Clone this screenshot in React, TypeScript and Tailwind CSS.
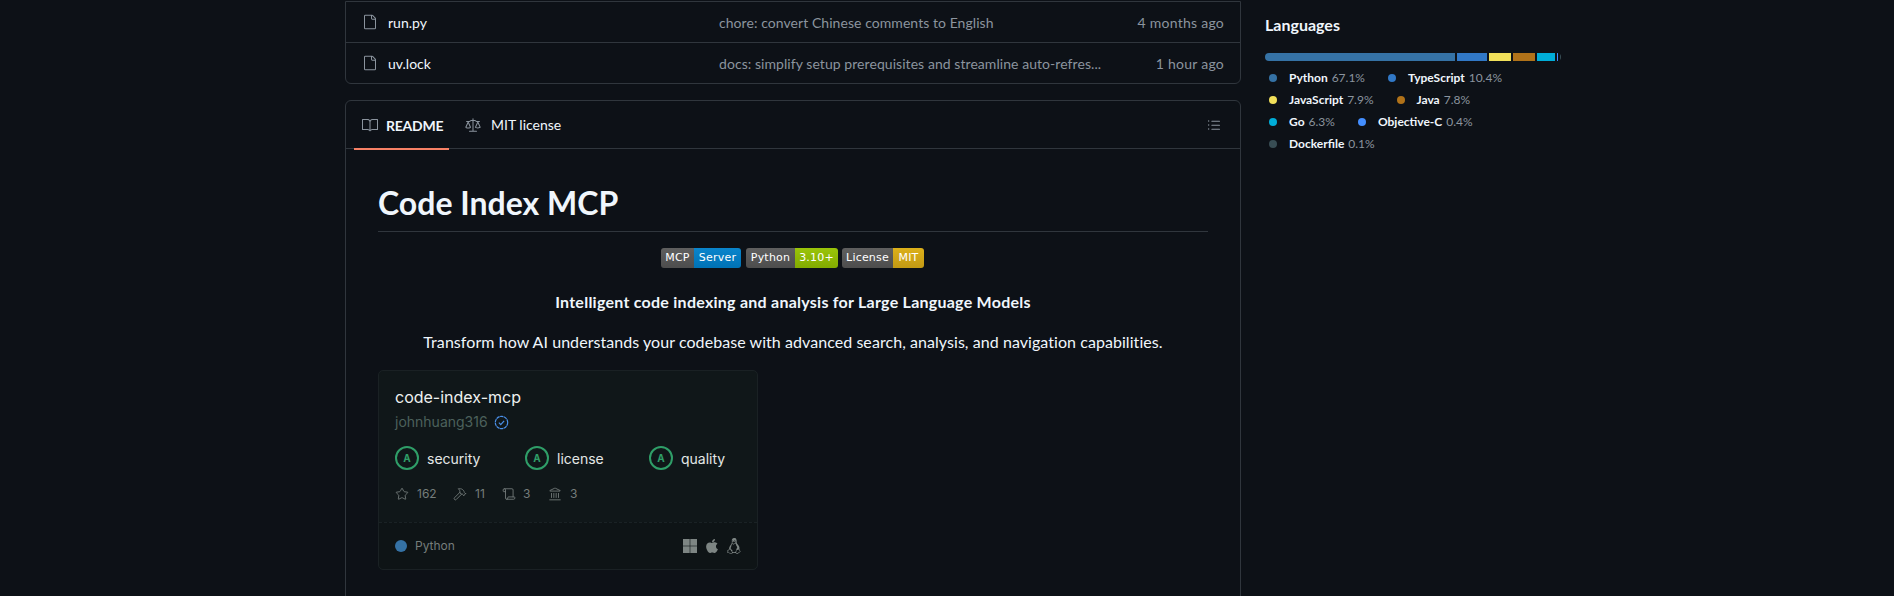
import { GoFile, GoBook, GoLaw, GoListUnordered } from "react-icons/go";
import { FaApple } from "react-icons/fa";
import { VscTerminalLinux } from "react-icons/vsc";
import { Star, Hammer, Scroll, Landmark } from "lucide-react";

const ui = "font-['Lato','Noto_Sans',sans-serif]";

function FileRow({ name, msg, time, last }: { name: string; msg: string; time: string; last?: boolean }) {
  return (
    <div className={`flex items-center pl-[16px] pr-[16px] ${last ? "h-[40px]" : "h-[41px] border-b border-[#30363d]"}`}>
      <GoFile className="w-4 h-4 text-[#8b949e] shrink-0" />
      <span className="ml-[10px] w-[331px] text-[14px] text-[#f0f6fc]">{name}</span>
      <span className="flex-1 text-[14px] tracking-[0.06px] text-[#8b949e]">{msg}</span>
      <span className="text-[14px] tracking-[0.25px] text-[#8b949e]">{time}</span>
    </div>
  );
}

function Badge({ l, r, w1, w2, color, cls = "" }: { l: string; r: string; w1: string; w2: string; color: string; cls?: string }) {
  return (
    <span className={`flex h-[20px] rounded-[3px] overflow-hidden text-[11px] tracking-[0.2px] text-white font-['DejaVu_Sans',sans-serif] ${cls}`}>
      <span className={`${w1} flex items-center justify-center bg-gradient-to-b from-[#5f5f5f] to-[#4d4d4d]`}>{l}</span>
      <span className={`${w2} flex items-center justify-center ${color}`}>{r}</span>
    </span>
  );
}

function Grade({ label, cls }: { label: string; cls: string }) {
  return (
    <div className={`flex items-center ${cls}`}>
      <span className="w-[24px] h-[24px] rounded-full border-2 border-[#2f9e68] flex items-center justify-center text-[10px] font-bold text-[#2f9e68]">A</span>
      <span className="ml-[8px] text-[14px] text-[#e4e8e6]">{label}</span>
    </div>
  );
}

const langs = [
  [["#3572A5", "Python", "67.1%"], ["#3178c6", "TypeScript", "10.4%"]],
  [["#f1e05a", "JavaScript", "7.9%"], ["#b07219", "Java", "7.8%"]],
  [["#00ADD8", "Go", "6.3%"], ["#438eff", "Objective-C", "0.4%"]],
  [["#384d54", "Dockerfile", "0.1%"]],
];

const bar = [
  ["w-[190px]", "#3572A5"],
  ["w-[30px]", "#3178c6"],
  ["w-[22px]", "#f1e05a"],
  ["w-[22px]", "#b07219"],
  ["w-[18px]", "#00ADD8"],
  ["w-[1px]", "#438eff"],
  ["w-[1px]", "#384d54"],
];

export default function App() {
  return (
    <div className={`h-[596px] w-full overflow-hidden bg-[#0d1117] flex pl-[345px] pt-px ${ui}`}>
      <main className="w-[896px] shrink-0">
        <div className="border border-[#30363d] rounded-b-[6px]">
          <FileRow name="run.py" msg="chore: convert Chinese comments to English" time="4 months ago" />
          <FileRow name="uv.lock" msg="docs: simplify setup prerequisites and streamline auto-refres..." time="1 hour ago" last />
        </div>
        <section className="mt-[16px] border border-[#30363d] rounded-t-[6px] h-[600px]">
          <div className="h-[48px] border-b border-[#30363d] flex items-stretch pl-[8px] pr-[18px]">
            <div className="w-[95px] flex items-center pl-[8px] border-b-2 border-[#f78166] h-[49px] pt-px">
              <GoBook className="w-4 h-4 text-[#8b949e]" />
              <span className="ml-[8px] text-[14px] font-bold tracking-[-0.25px] text-[#f0f6fc]">README</span>
            </div>
            <div className="flex items-center ml-[8px] pl-[8px] h-[47px]">
              <GoLaw className="w-4 h-4 text-[#8b949e]" />
              <span className="ml-[10px] text-[14px] text-[#f0f6fc]">MIT license</span>
            </div>
            <div className="ml-auto flex items-center">
              <GoListUnordered className="w-4 h-4 text-[#8b949e]" />
            </div>
          </div>
          <article className="px-[32px] pt-[34px]">
            <h1 className="text-[32px] font-bold leading-[40px] text-[#f0f6fc] pb-[8px] border-b border-[#30363d]">Code Index MCP</h1>
            <div className="mt-[16px] flex justify-center gap-[4px] pr-[1px]">
              <Badge l="MCP" r="Server" w1="w-[33px]" w2="w-[47px]" cls="mr-[1px]" color="bg-gradient-to-b from-[#0a85cc] to-[#0072b5]" />
              <Badge l="Python" r="3.10+" w1="w-[49px]" w2="w-[43px]" color="bg-gradient-to-b from-[#9ac40a] to-[#82ab00]" />
              <Badge l="License" r="MIT" w1="w-[51px]" w2="w-[31px]" color="bg-gradient-to-b from-[#dcb01a] to-[#c39a14]" />
            </div>
            <p className="mt-[22px] text-center text-[16px] font-bold tracking-[0.25px] text-[#f0f6fc] leading-[24px]">Intelligent code indexing and analysis for Large Language Models</p>
            <p className="mt-[16px] text-center text-[16px] tracking-[0.06px] text-[#f0f6fc] leading-[24px]">Transform how AI understands your codebase with advanced search, analysis, and navigation capabilities.</p>
            <div className="mt-[16px] w-[380px] h-[200px] border border-[#1a2124] rounded-[5px] bg-[#101719] font-['Inter',sans-serif] flex flex-col">
              <div className="flex-1 pl-[16px] pt-[16px]">
                <div className="text-[16px] leading-[20px] text-[#eef1f0]">code-index-mcp</div>
                <div className="mt-[5px] flex items-center text-[14px] leading-[20px] text-[#4c615c]">
                  johnhuang316
                  <svg className="ml-[6px] w-[15px] h-[15px]" viewBox="0 0 16 16" fill="none" stroke="#4a8fe8" strokeWidth="1.3"><circle cx="8" cy="8" r="6.6" strokeDasharray="3.6 0.5" /><path d="M5.2 8.2l2 2 3.6-4" /></svg>
                </div>
                <div className="mt-[14px] flex">
                  <Grade label="security" cls="w-[130px]" />
                  <Grade label="license" cls="w-[124px]" />
                  <Grade label="quality" cls="" />
                </div>
                <div className="mt-[15px] flex items-center text-[12px] text-[#757d7b]">
                  <Star className="w-[14px] h-[14px]" strokeWidth={1.5} />
                  <span className="ml-[8px] w-[36px]">162</span>
                  <Hammer className="w-[14px] h-[14px]" strokeWidth={1.5} />
                  <span className="ml-[8px] w-[27px]">11</span>
                  <Scroll className="w-[14px] h-[14px]" strokeWidth={1.5} />
                  <span className="ml-[7px] w-[25px]">3</span>
                  <Landmark className="w-[14px] h-[14px]" strokeWidth={1.5} />
                  <span className="ml-[8px]">3</span>
                </div>
              </div>
              <div className="h-[47px] border-t border-dashed border-[#1a2225] bg-[#0e1416] flex items-center pl-[16px] pr-[15px] rounded-b-[5px]">
                <span className="w-[12px] h-[12px] rounded-full bg-[#3572A5]" />
                <span className="ml-[8px] text-[12px] text-[#757d7b]">Python</span>
                <span className="ml-auto flex items-center text-[#7d8583]">
                  <svg className="w-[14px] h-[14px]" viewBox="0 0 14 14" fill="currentColor"><rect width="6.7" height="6.7" /><rect x="7.3" width="6.7" height="6.7" /><rect y="7.3" width="6.7" height="6.7" /><rect x="7.3" y="7.3" width="6.7" height="6.7" /></svg>
                  <FaApple className="ml-[9px] w-[12px] h-[16px]" />
                  <VscTerminalLinux className="ml-[8px] w-[16px] h-[16px]" />
                </span>
              </div>
            </div>
          </article>
        </section>
      </main>
      <aside className="ml-[24px] w-[296px] shrink-0 pt-[14px]">
        <h2 className="text-[16px] font-bold leading-[20px] text-[#f0f6fc]">Languages</h2>
        <div className="mt-[18px] h-[8px] w-[296px] flex gap-[2px] rounded-[4px] overflow-hidden">
          {bar.map(([w, c]) => (
            <span key={c} className={`${w} h-full`} style={{ backgroundColor: c }} />
          ))}
        </div>
        <div className="mt-[6px] flex flex-col text-[12px]">
          {langs.map((row, i) => (
            <div key={i} className="h-[22px] flex items-center gap-[19px]">
              {row.map(([c, n, p]) => (
                <span key={n} className="flex items-center">
                  <span className="ml-[4px] mr-[12px] w-[8px] h-[8px] rounded-full" style={{ backgroundColor: c }} />
                  <span className="font-bold text-[#f0f6fc]">{n}</span>
                  <span className="ml-[4px] text-[#8b949e]">{p}</span>
                </span>
              ))}
            </div>
          ))}
        </div>
      </aside>
    </div>
  );
}
